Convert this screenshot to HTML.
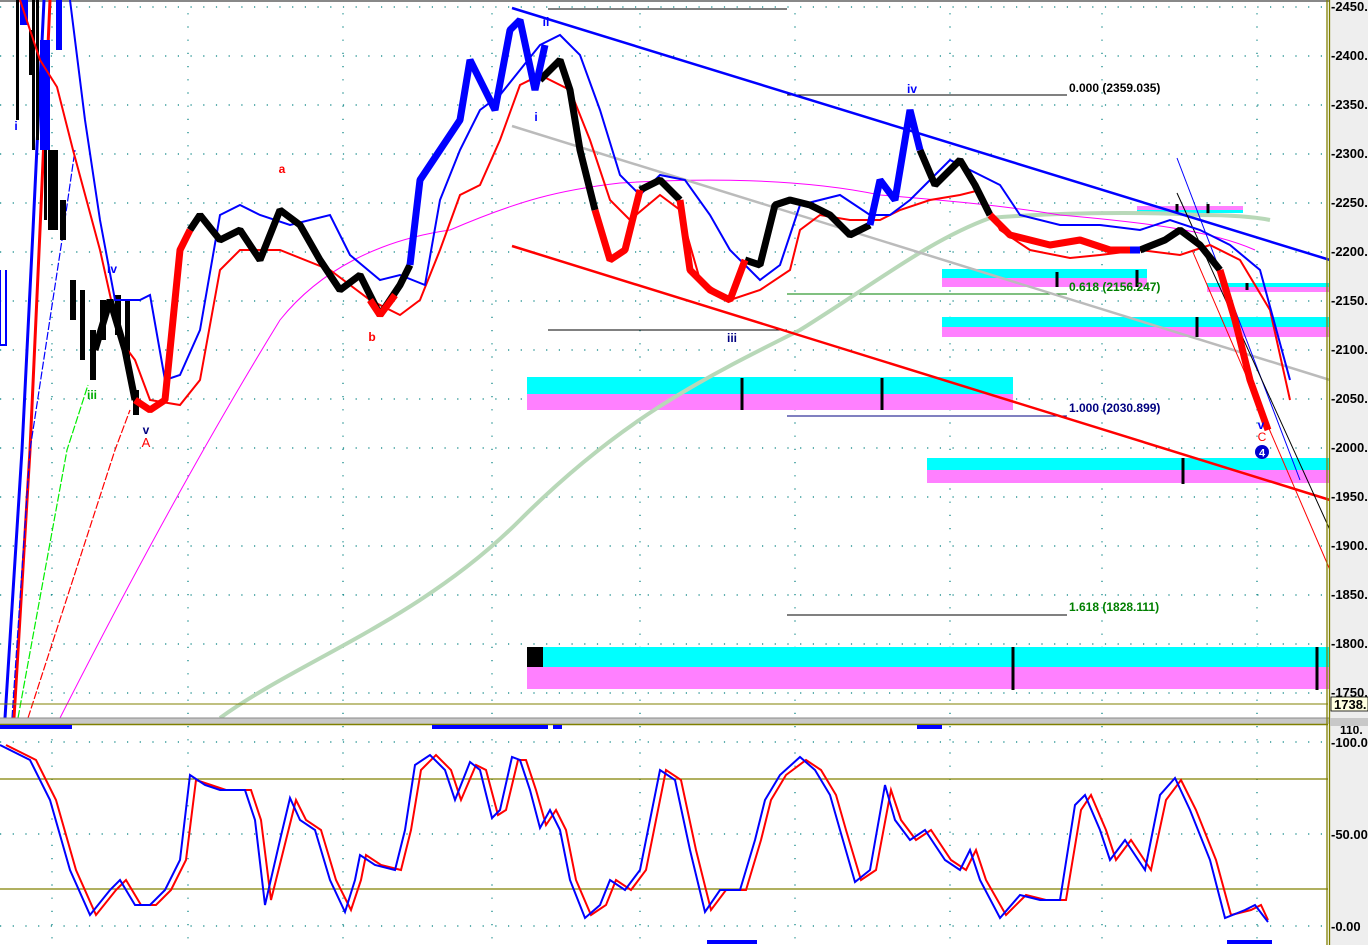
<!DOCTYPE html>
<html><head><meta charset="utf-8"><style>
html,body{margin:0;padding:0;background:#fff;width:1368px;height:945px;overflow:hidden}
svg{display:block}
text{font-family:"Liberation Sans",sans-serif}
</style></head><body>
<svg width="1368" height="945" viewBox="0 0 1368 945" xmlns="http://www.w3.org/2000/svg">
<rect width="1368" height="945" fill="#fff"/>
<g stroke="#008080" stroke-width="1.2" stroke-dasharray="1.2 11.5" fill="none">
<path d="M0 7H1326M0 56H1326M0 105H1326M0 154H1326M0 203H1326M0 252H1326M0 301H1326M0 350H1326M0 399H1326M0 448H1326M0 497H1326M0 546H1326M0 595H1326M0 644H1326M0 693H1326"/>
<path d="M0 742H1326M0 834H1326M0 926H1326"/>
</g>
<g stroke="#008080" stroke-width="1.2" stroke-dasharray="1.2 12" fill="none">
<path d="M52 0V718M188 0V718M343 0V718M492 0V718M640 0V718M795 0V718M950 0V718M1102 0V718M1257 0V718"/>
<path d="M52 726V945M188 726V945M343 726V945M492 726V945M640 726V945M795 726V945M950 726V945M1102 726V945M1257 726V945"/>
</g>
<rect x="0" y="0" width="1368" height="2" fill="#888"/>
<rect x="527" y="377" width="486" height="17" fill="#00ffff"/><rect x="527" y="394" width="486" height="16" fill="#ff80ff"/>
<rect x="942" y="269" width="205" height="9" fill="#00ffff"/><rect x="942" y="278" width="205" height="9" fill="#ff80ff"/>
<rect x="942" y="317" width="388" height="10" fill="#00ffff"/><rect x="942" y="327" width="388" height="10" fill="#ff80ff"/>
<rect x="927" y="458" width="403" height="12" fill="#00ffff"/><rect x="927" y="470" width="403" height="13" fill="#ff80ff"/>
<rect x="527" y="647" width="803" height="20" fill="#00ffff"/><rect x="527" y="667" width="803" height="22" fill="#ff80ff"/>
<rect x="527" y="647" width="16" height="20" fill="#000"/>
<rect x="1207" y="283" width="123" height="4" fill="#00ffff"/><rect x="1207" y="287" width="123" height="5" fill="#ff80ff"/>
<rect x="1137" y="206" width="106" height="4" fill="#ff80ff"/><rect x="1137" y="210" width="106" height="3" fill="#00ffff"/>
<g stroke="#000" stroke-width="3"><path d="M742 378V410M882 378V410M1183 458V484M1013 647V690M1317 647V690M1197 317V337M1057 272V287M1137 270V287M1247 283V290M1177 204V214M1208 204V214"/></g>
<g stroke-width="1" fill="none">
<path d="M548 9H787" stroke="#000"/><path d="M548 330H787" stroke="#000"/>
<path d="M787 95H1067" stroke="#000"/><path d="M787 294H1067" stroke="#008000"/>
<path d="M787 416H1067" stroke="#000080"/><path d="M787 615H1067" stroke="#000"/>
</g>
<g font-size="12" font-weight="bold">
<text x="1069" y="92" fill="#000">0.000 (2359.035)</text>
<text x="1069" y="291" fill="#008000">0.618 (2156.247)</text>
<text x="1069" y="412" fill="#000080">1.000 (2030.899)</text>
<text x="1069" y="611" fill="#008000">1.618 (1828.111)</text>
</g>
<path d="M220 718C300 660 420 620 520 520C620 420 700 380 800 330C880 280 930 240 990 218C1060 212 1150 212 1200 215C1240 215 1260 218 1270 220" stroke="#b8d8b8" stroke-width="4" fill="none"/>
<path d="M60 718C120 600 200 450 280 320C320 270 380 240 450 230C520 200 560 190 620 183C700 178 800 178 880 195C940 200 1000 205 1060 215C1140 222 1210 230 1255 250" stroke="#ff00ff" stroke-width="1" fill="none"/>
<path d="M512 126L1330 380" stroke="#bbb" stroke-width="2.5"/>
<path d="M512 8L1330 260" stroke="#0000ff" stroke-width="2.5"/>
<path d="M512 246L1330 500" stroke="#ff0000" stroke-width="2.5"/>
<path d="M5 718L22 450L33 230L44 0" stroke="#0000ff" stroke-width="3" fill="none"/>
<path d="M14 718L30 450L40 230L50 0" stroke="#ff0000" stroke-width="3" fill="none"/>
<path d="M12 718L30 450L62 240L75 150" stroke="#0000ff" stroke-width="1.2" fill="none" stroke-dasharray="8 2"/>
<path d="M18 718L67 450L88 385" stroke="#00ee00" stroke-width="1.2" fill="none" stroke-dasharray="8 2"/>
<path d="M28 718L115 450L130 410" stroke="#ff0000" stroke-width="1.2" fill="none" stroke-dasharray="8 2"/>
<path d="M0 270V345H6V270" stroke="#0000ff" stroke-width="2" fill="none"/>
<path d="M1177 158L1300 480" stroke="#0000ff" stroke-width="1"/>
<path d="M1177 193L1330 530" stroke="#000" stroke-width="1"/>
<path d="M1192 250L1330 570" stroke="#ff0000" stroke-width="1"/>
<!-- left candles -->
<g fill="#000"><rect x="16" y="0" width="3" height="120"/><rect x="29" y="30" width="6" height="45"/><rect x="32" y="0" width="3" height="150"/><rect x="36" y="0" width="3" height="140"/><rect x="44" y="130" width="3" height="90"/><rect x="48" y="150" width="10" height="80"/><rect x="60" y="200" width="6" height="40"/><rect x="70" y="280" width="6" height="40"/><rect x="80" y="290" width="5" height="70"/><rect x="90" y="330" width="6" height="50"/><rect x="100" y="300" width="6" height="40"/><rect x="115" y="295" width="6" height="40"/><rect x="125" y="300" width="5" height="60"/><rect x="133" y="390" width="6" height="25"/></g>
<g fill="#0000ff"><rect x="20" y="0" width="8" height="25"/><rect x="40" y="40" width="10" height="110"/><rect x="56" y="0" width="6" height="50"/></g>
<path d="M20 0L40 60L57 87L73 150L100 250L120 340L135 360L150 400L180 405L200 380L220 270L240 250L280 250L330 270L370 300L400 315L420 300L440 250L460 195L480 185L500 140L520 85L540 75L570 90L590 140L610 200L630 220L660 195L680 210L700 280L730 300L760 290L790 270L800 230L820 215L850 220L880 220L900 210L930 200L960 195L980 190L1000 230L1030 250L1070 258L1100 255L1140 250L1180 255L1210 245L1240 260L1270 310L1290 400" stroke="#ff0000" stroke-width="2" fill="none"/>
<path d="M70 0L85 120L100 220L115 300L140 300L150 295L165 380L180 375L200 330L220 215L240 205L260 215L290 225L330 215L350 255L380 280L400 275L425 285L440 200L460 150L480 110L500 95L520 70L540 45L560 35L580 55L600 110L620 175L640 195L660 175L685 180L710 215L730 250L760 280L780 265L800 205L840 195L870 215L890 215L910 200L930 180L950 160L980 175L1000 185L1020 215L1060 225L1100 225L1140 230L1170 220L1200 230L1230 245L1260 270L1290 380" stroke="#0000ff" stroke-width="2" fill="none"/>
<g fill="none" stroke-width="7" stroke-linejoin="bevel">
<path d="M95 350L110 300L125 350L135 400M190 230L200 215L220 240L240 230L260 260L280 210L300 225L320 260L340 290L360 275L380 315L400 285L410 265" stroke="#000"/>
<path d="M540 80L560 60L570 90L580 150L595 210M640 190L660 180L680 200M745 260L760 265L775 205L790 200L810 205L830 215L850 235L870 225M920 150L935 185L960 160L975 185L990 215M1140 250L1165 240L1180 230L1200 245L1220 270" stroke="#000"/>
<path d="M410 265L420 180L440 150L460 120L470 60L480 80L495 110L510 30L520 20L535 90L545 45M870 225L880 180L895 200L910 110L920 150M1130 250L1140 250" stroke="#0000ff"/>
<path d="M135 400L150 410L165 400L180 250L190 230M370 300L380 315L395 295M595 210L610 260L625 250L640 190M680 200L690 270L710 290L730 300L745 260M990 215L1010 235L1050 245L1080 240L1110 250L1130 250M1220 270L1235 320L1250 380L1268 430" stroke="#ff0000"/>
</g>
<g font-size="12" font-weight="bold" text-anchor="middle">
<text x="16" y="130" fill="#0000ff">i</text>
<text x="92" y="399" fill="#00aa00">iii</text>
<text x="112" y="273" fill="#0000ff">iv</text>
<text x="146" y="434" fill="#000080">v</text>
<text x="146" y="447" fill="#ff0000" font-size="13" font-weight="normal">A</text>
<text x="282" y="173" fill="#ff0000">a</text>
<text x="372" y="341" fill="#ff0000">b</text>
<text x="536" y="121" fill="#0000ff">i</text>
<text x="546" y="26" fill="#0000ff">ii</text>
<text x="732" y="342" fill="#000080">iii</text>
<text x="912" y="93" fill="#0000ff">iv</text>
<text x="1261" y="429" fill="#0000ff">v</text>
<text x="1262" y="441" fill="#ff0000" font-weight="normal">C</text>
</g>
<circle cx="1262" cy="452" r="7" fill="#0000cc"/>
<text x="1262" y="456.5" font-size="11" font-weight="bold" fill="#fff" text-anchor="middle">4</text>
<path d="M0 704H1328" stroke="#808000" stroke-width="1"/>
<rect x="0" y="718" width="1368" height="6" fill="#c8c8c8"/>
<path d="M0 718H1368" stroke="#888" stroke-width="1"/>
<path d="M0 724.5H1328" stroke="#808000" stroke-width="1.5"/>
<g fill="#0000ff"><rect x="0" y="725" width="72" height="4"/><rect x="432" y="725" width="116" height="4"/><rect x="553" y="725" width="9" height="4"/><rect x="917" y="725" width="25" height="4"/>
<rect x="707" y="940" width="50" height="4"/><rect x="1227" y="940" width="45" height="4"/></g>
<path d="M0 779H1328M0 889H1328" stroke="#808000" stroke-width="1.2"/>
<path d="M6 745L36 760L56 800L76 870L96 915L116 890L126 880L141 905L156 905L171 890L186 860L196 780L211 785L226 790L251 790L261 820L271 900L286 840L296 800L306 820L321 830L336 880L351 910L361 880L366 855L381 865L401 870L411 830L421 770L436 755L451 770L461 800L476 765L486 770L498 815L506 810L518 760L526 760L536 790L546 825L556 810L566 830L576 880L591 915L606 905L616 880L631 890L646 870L666 770L681 780L696 850L711 910L726 890L746 890L761 840L771 800L786 775L806 760L821 770L836 795L846 830L861 880L876 870L891 790L901 820L916 840L931 830L951 860L966 870L976 850L986 880L1006 915L1026 895L1046 900L1066 900L1081 810L1091 795L1106 830L1116 860L1131 840L1151 870L1166 800L1181 780L1196 810L1216 860L1231 915L1251 910L1261 905L1268 920" stroke="#ff0000" stroke-width="2" fill="none"/>
<path d="M0 745L30 760L50 800L70 870L90 915L110 890L120 880L135 905L150 905L165 890L180 860L190 775L205 785L220 790L245 790L255 820L265 905L280 840L290 798L300 820L315 830L330 880L345 912L355 880L360 855L375 865L395 870L405 830L415 765L430 755L445 770L455 800L470 762L480 770L492 818L500 810L512 757L520 760L530 790L540 828L550 810L560 830L570 880L585 918L600 905L610 880L625 890L640 870L660 770L675 780L690 850L705 912L720 890L740 890L755 840L765 800L780 775L800 757L815 770L830 795L840 830L855 882L870 870L885 785L895 820L910 840L925 830L945 860L960 870L970 850L980 880L1000 918L1020 895L1040 900L1060 900L1075 805L1085 795L1100 830L1110 860L1125 840L1145 870L1160 795L1175 778L1190 810L1210 860L1225 918L1245 910L1255 905L1268 922" stroke="#0000ff" stroke-width="2" fill="none"/>
<rect x="1330" y="0" width="38" height="945" fill="#eeeeee"/>
<path d="M1327 0V945M1329.5 0V945" stroke="#808000" stroke-width="1.3"/>
<g font-size="13" font-weight="bold" fill="#000">
<text x="1331" y="11">-2450.</text><text x="1331" y="60">-2400.</text><text x="1331" y="109">-2350.</text><text x="1331" y="158">-2300.</text><text x="1331" y="207">-2250.</text><text x="1331" y="256">-2200.</text><text x="1331" y="305">-2150.</text><text x="1331" y="354">-2100.</text><text x="1331" y="403">-2050.</text><text x="1331" y="452">-2000.</text><text x="1331" y="501">-1950.</text><text x="1331" y="550">-1900.</text><text x="1331" y="599">-1850.</text><text x="1331" y="648">-1800.</text><text x="1331" y="697">-1750.</text>
</g>
<rect x="1331" y="697" width="37" height="14" fill="#ffffe0" stroke="#000" stroke-width="0.8"/>
<text x="1334" y="709" font-size="13" font-weight="bold">1738.</text>
<rect x="1330" y="718" width="38" height="6" fill="#c8c8c8"/>
<text x="1340" y="734" font-size="12" font-weight="bold">110.</text>
<rect x="1330" y="718" width="38" height="8" fill="#c8c8c8"/>
<g font-size="13" font-weight="bold"><text x="1331" y="747">-100.0</text><text x="1331" y="839">-50.00</text><text x="1331" y="931">-0.00</text></g>
</svg>
</body></html>
